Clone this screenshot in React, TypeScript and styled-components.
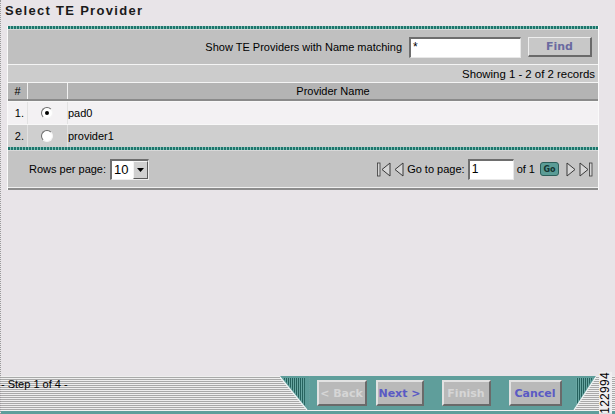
import React from 'react';
import styled, { createGlobalStyle } from 'styled-components';

const GlobalStyle = createGlobalStyle`
  html, body {
    margin: 0;
    padding: 0;
    background: #e8e4e8;
  }
  body {
    font-family: "Liberation Sans", Arial, sans-serif;
    font-size: 11px;
    color: #000;
  }
`;

const Page = styled.div`
  width: 615px;
  height: 414px;
  display: flex;
  flex-direction: column;
  box-sizing: border-box;
  border-left: 1px dotted #9a9a9a;
  overflow: hidden;
`;

const Title = styled.div`
  height: 26px;
  padding: 3px 0 0 4px;
  box-sizing: border-box;
  font-size: 13px;
  font-weight: bold;
  letter-spacing: 1.3px;
  color: #1a1a1a;
`;

const Panel = styled.div`
  margin-left: 6px;
  width: 590px;
  border-left: 1px solid #fafafa;
  border-right: 1px solid #fafafa;
  display: flex;
  flex-direction: column;
`;

const TealStripe = styled.div`
  height: 3px;
  background: repeating-linear-gradient(90deg, #1e766c 0 2px, #7fbdb5 2px 3px);
  border-bottom: 1px solid #d8d8d8;
`;

const FilterRow = styled.div`
  height: 34px;
  background: #c0c0c0;
  display: flex;
  align-items: center;
  justify-content: flex-end;
  padding-right: 6px;
  gap: 7px;
  border-bottom: 1px solid #f4f4f4;
`;

const Label = styled.span`
  font-size: 11px;
  white-space: nowrap;
`;

const TextInput = styled.div<{ $w: number; $h: number }>`
  width: ${p => p.$w}px;
  height: ${p => p.$h}px;
  box-sizing: border-box;
  background: #fff;
  border-top: 2px solid #6e6e6e;
  border-left: 2px solid #6e6e6e;
  border-right: 1px solid #e8e8e8;
  border-bottom: 1px solid #e8e8e8;
  font-size: 12px;
  padding: 1px 2px;
  line-height: 14px;
`;

const GreyButton = styled.div<{ $w: number; $disabled?: boolean }>`
  width: ${p => p.$w}px;
  height: 20px;
  box-sizing: border-box;
  background: #c8c8c8;
  border-top: 1px solid #eeeeee;
  border-left: 1px solid #eeeeee;
  border-right: 2px solid #6a6a6a;
  border-bottom: 2px solid #6a6a6a;
  display: flex;
  align-items: center;
  justify-content: center;
  font-family: "DejaVu Sans", Verdana, sans-serif;
  font-weight: bold;
  font-size: 11px;
  color: ${p => (p.$disabled ? '#dcdcdc' : '#6a6aa0')};
`;

const InfoRow = styled.div`
  height: 17px;
  background: #cccccc;
  display: flex;
  align-items: center;
  justify-content: flex-end;
  padding-right: 3px;
  border-bottom: 1px solid #f4f4f4;
  font-size: 11.4px;
`;

const cols = '20px 40px 1fr';

const HeaderRow = styled.div`
  display: grid;
  grid-template-columns: ${cols};
  height: 16px;
  background: #b4b4b4;
  border-bottom: 2px solid #8a8a8a;
`;

const HeadCell = styled.div<{ $center?: boolean }>`
  display: flex;
  align-items: center;
  justify-content: ${p => (p.$center ? 'center' : 'flex-start')};
  padding-left: ${p => (p.$center ? 0 : 6)}px;
  border-right: 1px solid #f0f0f0;
  font-size: 11px;
  &:last-child {
    border-right: none;
  }
`;

const DataRow = styled.div<{ $alt?: boolean }>`
  display: grid;
  grid-template-columns: ${cols};
  height: 22px;
  background: ${p => (p.$alt ? '#cfcfcf' : '#f3f1f3')};
  border-top: 1px solid #f8f8f8;
`;

const Cell = styled.div<{ $align?: string }>`
  display: flex;
  align-items: center;
  justify-content: ${p => p.$align || 'flex-start'};
  border-right: 1px solid #e2e2e2;
  font-size: 11px;
  &:last-child {
    border-right: none;
  }
`;

const NumCell = styled(Cell)`
  justify-content: flex-end;
  padding-right: 3px;
`;

const Radio = styled.span<{ $checked?: boolean }>`
  width: 12px;
  height: 12px;
  box-sizing: border-box;
  border-radius: 50%;
  background: #fff;
  border: 1px solid;
  border-color: #6a6a6a #f4f4f4 #f4f4f4 #6a6a6a;
  margin-right: 2px;
  display: flex;
  align-items: center;
  justify-content: center;
  &::after {
    content: '';
    width: 4px;
    height: 4px;
    border-radius: 50%;
    background: ${p => (p.$checked ? '#000' : 'transparent')};
  }
`;

const PagerRow = styled.div`
  height: 36px;
  background: #c4c4c4;
  display: flex;
  align-items: center;
  padding: 0 5px 0 21px;
  border-bottom: 1px solid #f0f0f0;
`;

const PagerLeft = styled.div`
  display: flex;
  align-items: center;
  gap: 4px;
  flex: 1;
`;

const PagerRight = styled.div`
  display: flex;
  align-items: center;
  gap: 3px;
`;

const SelectBox = styled.div`
  width: 39px;
  height: 21px;
  box-sizing: border-box;
  background: #fff;
  border-top: 2px solid #6e6e6e;
  border-left: 2px solid #6e6e6e;
  border-right: 1px solid #eeeeee;
  border-bottom: 1px solid #eeeeee;
  display: flex;
  align-items: stretch;
  font-size: 13px;
`;

const SelectValue = styled.span`
  flex: 1;
  padding-left: 2px;
  line-height: 17px;
`;

const SelectArrow = styled.span`
  width: 15px;
  box-sizing: border-box;
  background: #d0d0d0;
  border-top: 1px solid #f4f4f4;
  border-left: 1px solid #f4f4f4;
  border-right: 1px solid #5a5a5a;
  border-bottom: 1px solid #5a5a5a;
  display: flex;
  align-items: center;
  justify-content: center;
`;

const GoButton = styled.div`
  width: 19px;
  height: 14px;
  box-sizing: border-box;
  border-radius: 3px;
  background: #5a9c96;
  border: 1px solid #2c5f5a;
  color: #123431;
  font-family: "DejaVu Sans", Verdana, sans-serif;
  font-size: 8px;
  font-weight: bold;
  display: flex;
  align-items: center;
  justify-content: center;
  margin: 0 4px 0 2px;
`;

const PanelBottom = styled.div`
  height: 2px;
  background: #8c8c8c;
`;

const Spacer = styled.div`
  flex: 1;
`;

const Footer = styled.div`
  display: flex;
  flex-direction: column;
`;

const FooterBar = styled.div`
  height: 34px;
  display: flex;
  background: repeating-linear-gradient(180deg, #efefef 0 1px, #a9a9a9 1px 2px);
`;

const StepArea = styled.div`
  width: 279px;
  font-size: 11px;
  padding-top: 2px;
  line-height: 12px;
`;

const TealBlock = styled.div`
  width: 262px;
  background: #5f9e9b;
  display: flex;
  align-items: center;
  padding-left: 7px;
  box-sizing: border-box;
  gap: 9px;
`;

const WizButton = styled.div<{ $w: number; $disabled?: boolean; $gap?: number }>`
  width: ${p => p.$w}px;
  height: 26px;
  box-sizing: border-box;
  margin-left: ${p => p.$gap || 0}px;
  background: #b9b9b9;
  border-top: 2px solid #e2e2e2;
  border-left: 2px solid #e2e2e2;
  border-right: 2px solid #6a6a6a;
  border-bottom: 2px solid #6a6a6a;
  display: flex;
  align-items: center;
  justify-content: center;
  font-family: "DejaVu Sans", Verdana, sans-serif;
  font-weight: bold;
  font-size: 11px;
  color: ${p => (p.$disabled ? '#d6d6d6' : '#5a5ac4')};
`;

const IdArea = styled.div`
  width: 19px;
  display: flex;
  justify-content: center;
  align-items: center;
`;

const IdText = styled.span`
  writing-mode: vertical-rl;
  transform: rotate(180deg);
  font-size: 12px;
  letter-spacing: 0.3px;
  line-height: 13px;
  color: #000;
  background: #f0eef0;
`;

const BottomStrip = styled.div`
  height: 3px;
  background: #5f9e9b;
  border-top: 1px solid #f2f2f2;
`;

function Corner({ flip }: { flip?: boolean }) {
  const w = flip ? 25 : 30;
  const id = flip ? 'stR' : 'stL';
  return (
    <svg width={w} height={34} viewBox={`0 0 ${w} 34`} style={{ display: 'block', transform: flip ? 'scaleX(-1)' : undefined }}>
      <defs>
        <pattern id={id} width="2" height="4" patternUnits="userSpaceOnUse">
          <rect width="1" height="4" fill="#235f5b" />
          <rect x="1" width="1" height="4" fill="#6aa8a4" />
        </pattern>
      </defs>
      <polygon points={`0,0 ${w},0 ${w},34 ${w - 3},34`} fill="#5f9e9b" />
      <polygon points={`3,2 ${w - 5},2 ${w - 5},${30}`} fill={`url(#${id})`} />
      <line x1="0" y1="1" x2={w - 3} y2="34" stroke="#eef4f4" strokeWidth="1.2" />
    </svg>
  );
}

function NavIcon({ dir, bar }: { dir: 'left' | 'right'; bar?: boolean }) {
  const w = bar ? 14 : 10;
  const tri = dir === 'left'
    ? (bar ? '13,1 5,7.5 13,14' : '9,1 1,7.5 9,14')
    : '1,1 9,7.5 1,14';
  const barX = dir === 'left' ? 1.5 : 11.5;
  return (
    <svg width={w} height={15} viewBox={`0 0 ${w} 15`}>
      <polygon points={tri} fill="#d6d6d6" stroke="#3a3a3a" strokeWidth="1" />
      {bar && <rect x={barX - 1} y="1" width="2.5" height="13" fill="#d6d6d6" stroke="#3a3a3a" strokeWidth="0.8" />}
    </svg>
  );
}

const providers = ['pad0', 'provider1'];

export default function App() {
  return (
    <>
      <GlobalStyle />
      <Page>
        <Title>Select TE Provider</Title>
        <Panel>
          <TealStripe />
          <FilterRow>
            <Label>Show TE Providers with Name matching</Label>
            <TextInput $w={112} $h={21}>*</TextInput>
            <GreyButton $w={64}>Find</GreyButton>
          </FilterRow>
          <InfoRow>Showing 1 - 2 of 2 records</InfoRow>
          <HeaderRow>
            <HeadCell $center>#</HeadCell>
            <HeadCell />
            <HeadCell $center>Provider Name</HeadCell>
          </HeaderRow>
          {providers.map((name, i) => (
            <DataRow key={name} $alt={i % 2 === 1}>
              <NumCell>{i + 1}.</NumCell>
              <Cell $align="center">
                <Radio $checked={i === 0} />
              </Cell>
              <Cell>{name}</Cell>
            </DataRow>
          ))}
          <TealStripe />
          <PagerRow>
            <PagerLeft>
              <Label>Rows per page:</Label>
              <SelectBox>
                <SelectValue>10</SelectValue>
                <SelectArrow>
                  <svg width="7" height="4" viewBox="0 0 7 4">
                    <polygon points="0,0 7,0 3.5,4" fill="#000" />
                  </svg>
                </SelectArrow>
              </SelectBox>
            </PagerLeft>
            <PagerRight>
              <NavIcon dir="left" bar />
              <NavIcon dir="left" />
              <Label>Go to page:</Label>
              <TextInput $w={46} $h={21}>1</TextInput>
              <Label>of 1</Label>
              <GoButton>Go</GoButton>
              <NavIcon dir="right" />
              <NavIcon dir="right" bar />
            </PagerRight>
          </PagerRow>
          <PanelBottom />
        </Panel>
        <Spacer />
        <Footer>
          <FooterBar>
            <StepArea>- Step 1 of 4 -</StepArea>
            <Corner />
            <TealBlock>
              <WizButton $w={50} $disabled>&lt; Back</WizButton>
              <WizButton $w={48}>Next &gt;</WizButton>
              <WizButton $w={49} $gap={9} $disabled>Finish</WizButton>
              <WizButton $w={53} $gap={9}>Cancel</WizButton>
            </TealBlock>
            <Corner flip />
            <IdArea>
              <IdText>122994</IdText>
            </IdArea>
          </FooterBar>
          <BottomStrip />
        </Footer>
      </Page>
    </>
  );
}
